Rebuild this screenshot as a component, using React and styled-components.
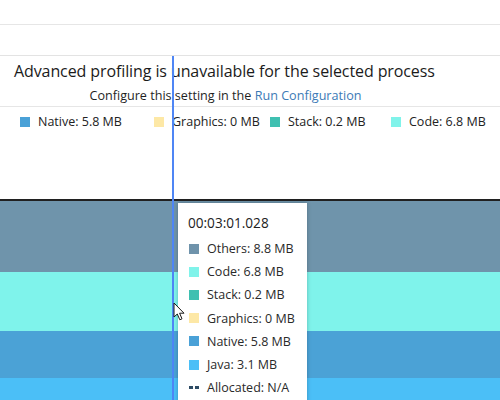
import React from 'react'
import styled, { createGlobalStyle } from 'styled-components'

const GlobalStyle = createGlobalStyle`
  html, body {
    margin: 0;
    padding: 0;
    background: #ffffff;
  }
  body {
    font-family: "Open Sans", "Noto Sans", sans-serif;
    color: #1f1f1f;
  }
`

const legendItems = [
  { label: 'Native: 5.8 MB', color: '#4aa1d7', width: 134 },
  { label: 'Graphics: 0 MB', color: '#fde8a6', width: 116 },
  { label: 'Stack: 0.2 MB', color: '#3fc0b1', width: 121 },
  { label: 'Code: 6.8 MB', color: '#80f3ea', width: 100 },
]

const bands = [
  { color: '#6f94ab', height: 71 },
  { color: '#7ff3eb', height: 59 },
  { color: '#4ba2d6', height: 47 },
  { color: '#4bbff7', height: 30 },
]

const tooltipItems = [
  { label: 'Others: 8.8 MB', color: '#6f93ab' },
  { label: 'Code: 6.8 MB', color: '#80f3ea' },
  { label: 'Stack: 0.2 MB', color: '#3fc0b1' },
  { label: 'Graphics: 0 MB', color: '#fde8a6' },
  { label: 'Native: 5.8 MB', color: '#4aa1d7' },
  { label: 'Java: 3.1 MB', color: '#4bbff7' },
]

function App() {
  return (
    <>
      <GlobalStyle />
      <Screen>
        <TopStrip />
        <ToolStrip />
        <Message>
          <Title>Advanced profiling is unavailable for the selected process</Title>
          <Hint>
            Configure this setting in the <Link>Run Configuration</Link>
          </Hint>
        </Message>
        <LegendArea>
          <Legend>
            {legendItems.map((item) => (
              <LegendItem key={item.label} $width={item.width}>
                <Swatch $color={item.color} />
                {item.label}
              </LegendItem>
            ))}
          </Legend>
        </LegendArea>
        <Chart>
          {bands.map((band) => (
            <Band key={band.color} $color={band.color} $height={band.height} />
          ))}
        </Chart>

        <Cursor />

        <Tooltip>
          <Time>00:03:01.028</Time>
          {tooltipItems.map((item) => (
            <TipRow key={item.label}>
              <Swatch $color={item.color} />
              {item.label}
            </TipRow>
          ))}
          <TipRow>
            <Dash />
            Allocated: N/A
          </TipRow>
        </Tooltip>

        <Pointer viewBox="0 0 12 19" width="12" height="19">
          <path
            d="M1 1 L1 15 L4.3 12 L6.8 17.8 L9 16.8 L6.6 11.2 L11 11.2 Z"
            fill="#ffffff"
            stroke="#1a1a1a"
            strokeWidth="1"
            strokeLinejoin="round"
          />
        </Pointer>
      </Screen>
    </>
  )
}

export default App

const Screen = styled.div`
  position: relative;
  width: 500px;
  height: 400px;
  overflow: hidden;
  display: flex;
  flex-direction: column;
`

const TopStrip = styled.div`
  height: 24px;
  border-bottom: 1px solid #e6e6e6;
`

const ToolStrip = styled.div`
  height: 30px;
  border-bottom: 1px solid #e3e3e3;
`

const Message = styled.div`
  height: 50px;
  border-bottom: 1px solid #e6e6e6;
  display: flex;
  flex-direction: column;
  align-items: flex-start;
  padding-left: 14px;
`

const Title = styled.div`
  margin-top: 4px;
  font-size: 16px;
  line-height: 22px;
  color: #1b1b1b;
  letter-spacing: -0.1px;
`

const Hint = styled.div`
  align-self: stretch;
  padding-right: 63px;
  text-align: center;
  font-size: 12.6px;
  line-height: 17px;
  margin-top: 5px;
  color: #1f1f1f;
`

const Link = styled.span`
  color: #3c7ab6;
`

const LegendArea = styled.div`
  height: 92px;
  border-bottom: 2px solid #202020;
`

const Legend = styled.div`
  display: flex;
  padding: 7px 0 0 20px;
`

const LegendItem = styled.div`
  display: flex;
  align-items: center;
  width: ${(p) => p.$width}px;
  flex-shrink: 0;
  font-size: 12.5px;
  line-height: 16px;
  color: #222;
`

const Swatch = styled.span`
  width: 10px;
  height: 10px;
  background: ${(p) => p.$color};
  margin-right: 8px;
  flex-shrink: 0;
`

const Chart = styled.div`
  flex: 1;
  display: flex;
  flex-direction: column;
`

const Band = styled.div`
  height: ${(p) => p.$height}px;
  flex-shrink: 0;
  background: ${(p) => p.$color};
  &:last-child {
    flex: 1;
  }
`

const Cursor = styled.div`
  position: absolute;
  left: 172px;
  top: 56px;
  bottom: 0;
  width: 2px;
  background: #4f86f5;
`

const Tooltip = styled.div`
  position: absolute;
  left: 178px;
  top: 203px;
  width: 129px;
  height: 210px;
  background: #ffffff;
  box-shadow: 0 0 4px rgba(0, 0, 0, 0.25);
  padding: 11px 0 0 10px;
  box-sizing: border-box;
`

const Time = styled.div`
  font-size: 13.6px;
  line-height: 18px;
  color: #222;
  margin-bottom: 5px;
`

const TipRow = styled.div`
  display: flex;
  align-items: center;
  height: 23.2px;
  font-size: 12.5px;
  color: #2a2a2a;
  padding-left: 1px;
`

const Dash = styled.span`
  width: 10px;
  height: 3px;
  margin-right: 8px;
  background: repeating-linear-gradient(
    to right,
    #2d4b64 0,
    #2d4b64 4px,
    transparent 4px,
    transparent 6px
  );
`

const Pointer = styled.svg`
  position: absolute;
  left: 173px;
  top: 302px;
`
